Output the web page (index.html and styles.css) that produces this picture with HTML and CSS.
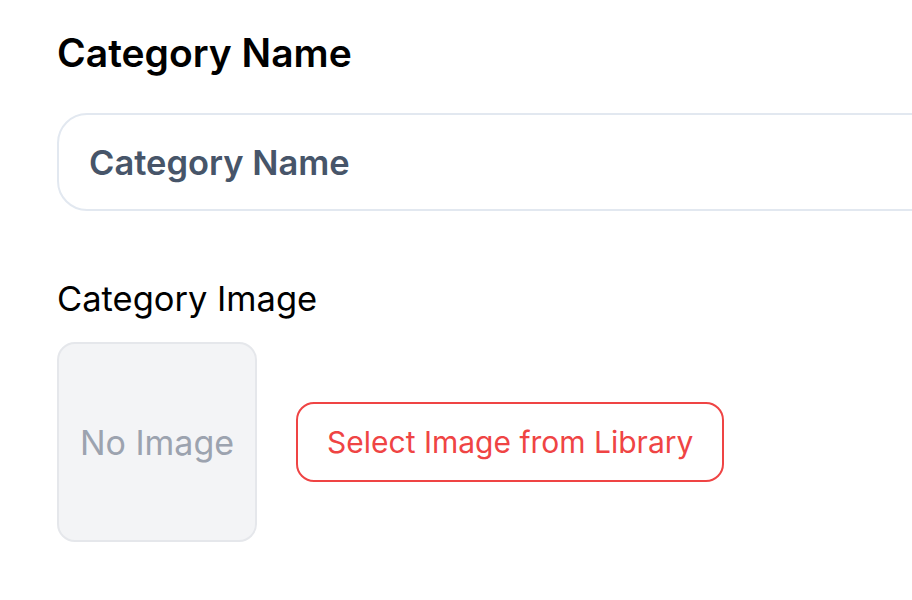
FILE: index.html
```html
<!DOCTYPE html>
<html lang="en">
  <head>
    <meta charset="UTF-8">
    <meta name="viewport" content="width=device-width, initial-scale=1.0">
    <title>Category</title>
    <link rel="stylesheet" href="styles.css">
  </head>
<body>
  <form class="category-form">
    <label class="field-title" for="category-name">Category Name</label>
    <input type="text" id="category-name" class="name-input" placeholder="Category Name">

    <div class="field-label">Category Image</div>
    <div class="image-row">
      <div class="image-preview">No Image</div>
      <button type="button" class="library-btn">Select Image from Library</button>
    </div>
  </form>
</body>
</html>
```

FILE: styles.css
```css
/* page */
body {
  font-family: Inter, "Noto Sans", sans-serif;
  background-color: #fff;
  margin: 0;
}

.category-form {
  display: flex;
  flex-direction: column;
  padding: 27px 0 0 57px;
}

/* name field */
.field-title {
  font-size: 39px;
  font-weight: 600;
  color: #000;
  line-height: 52px;
}

.name-input {
  margin-top: 34px;
  width: 900px;
  height: 98px;
  box-sizing: border-box;
  border: 2px solid #e2e8f0;
  border-radius: 30px;
  padding: 0 30px;
  font-family: inherit;
  font-size: 34.5px;
  font-weight: 600;
  outline: none;
}

.name-input::placeholder {
  color: #475569;
}

/* image field */
.field-label {
  margin-top: 70px;
  font-size: 34.5px;
  line-height: 36px;
  color: #000;
}

.image-row {
  display: flex;
  align-items: center;
  gap: 39px;
  margin-top: 25px;
}

.image-preview {
  width: 200px;
  height: 200px;
  box-sizing: border-box;
  background-color: #f3f4f6;
  border: 2px solid #e5e7eb;
  border-radius: 18px;
  display: flex;
  align-items: center;
  justify-content: center;
  font-size: 34px;
  color: #9ca3af;
}

.library-btn {
  height: 80px;
  padding: 0 29px;
  background: #fff;
  border: 2px solid #ef4444;
  border-radius: 18px;
  color: #ef4444;
  font-family: inherit;
  font-size: 30px;
}
```
